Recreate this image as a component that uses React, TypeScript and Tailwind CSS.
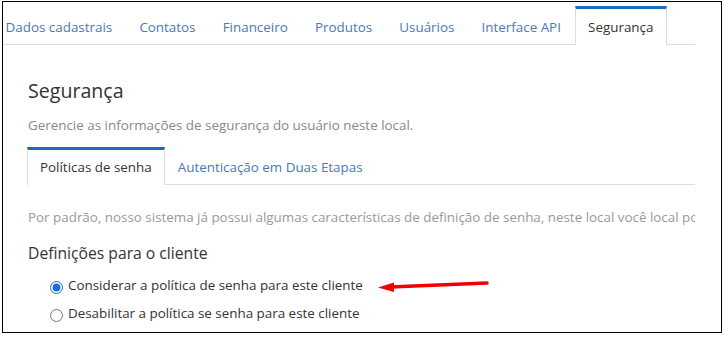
import React from "react";

const TOP_TABS = [
  "Dados cadastrais",
  "Contatos",
  "Financeiro",
  "Produtos",
  "Usuários",
  "Interface API",
  "Segurança",
];

const INNER_TABS = ["Políticas de senha", "Autenticação em Duas Etapas"];

function TabBar({
  tabs,
  active,
  className,
  tabClass,
}: {
  tabs: string[];
  active: string;
  className?: string;
  tabClass: string;
}) {
  return (
    <ul className={`flex border-b border-[#dddddd] ${className ?? ""}`}>
      {tabs.map((t) => {
        const isActive = t === active;
        return (
          <li
            key={t}
            className={
              isActive
                ? `-mb-px whitespace-nowrap border-x border-t-[3px] border-x-[#dddddd] border-t-[#1a6dbf] bg-white text-[#333333] ${tabClass}`
                : `-mb-px whitespace-nowrap border-x border-t-[3px] border-transparent text-[#4a78b8] ${tabClass}`
            }
          >
            {t}
          </li>
        );
      })}
    </ul>
  );
}

export default function App() {
  return (
    <div
      className="w-[725px] h-[337px] bg-white pl-[2px] pt-[1px]"
      style={{ fontFamily: '"Open Sans", "Noto Sans", sans-serif' }}
    >
      <div className="w-[720px] h-[332px] border border-black overflow-hidden">
        <div className="relative w-[692px] h-full overflow-hidden">
          {/* top tabs */}
          <div className="pt-[4px]">
            <TabBar
              tabs={TOP_TABS}
              active="Segurança"
              className="ml-[-11px]"
              tabClass="px-[12.6px] pt-[8px] pb-[8px] text-[13.4px] leading-5"
            />
          </div>

          <div className="pl-[25px]">
            <h2 className="mt-[32px] text-[19.6px] leading-7 text-[#333333]">Segurança</h2>
            <p className="mt-[10px] text-[13.4px] leading-5 text-[#888888]">
              Gerencie as informações de segurança do usuário neste local.
            </p>

            {/* inner tabs */}
            <TabBar
              tabs={INNER_TABS}
              active="Políticas de senha"
              className="mt-[12px] ml-[-1px]"
              tabClass="px-[12px] pt-[7px] pb-[8px] text-[13.4px] leading-5"
            />

            <p className="mt-[22px] whitespace-nowrap text-[13.4px] leading-5 text-[#999999]">
              Por padrão, nosso sistema já possui algumas características de definição de senha, neste local você local pode
            </p>

            <h3 className="mt-[14px] text-[15.7px] leading-6 text-[#333333]">Definições para o cliente</h3>

            <div className="mt-[10px] ml-[22px] flex flex-col gap-[8px] text-[13.4px] leading-5 text-[#333333]">
              <label className="flex items-start">
                <input
                  type="radio"
                  name="politica"
                  defaultChecked
                  className="m-0 mt-[6px] mr-[5px] h-[13px] w-[13px] accent-[#1a6dd6]"
                />
                Considerar a política de senha para este cliente
              </label>
              <label className="flex items-start">
                <input
                  type="radio"
                  name="politica"
                  className="m-0 mt-[6px] mr-[5px] h-[13px] w-[13px] accent-[#1a6dd6]"
                />
                Desabilitar a política se senha para este cliente
              </label>
            </div>
          </div>

          {/* annotation arrow */}
          <svg
            className="absolute left-[367px] top-[273px]"
            width="125"
            height="22"
            viewBox="0 0 125 22"
          >
            <line x1="117" y1="8" x2="20" y2="12" stroke="#f00000" strokeWidth="3.5" strokeLinecap="round" />
            <polygon points="8,12.5 24,7.5 24,17" fill="#f00000" />
          </svg>
        </div>
      </div>
    </div>
  );
}
